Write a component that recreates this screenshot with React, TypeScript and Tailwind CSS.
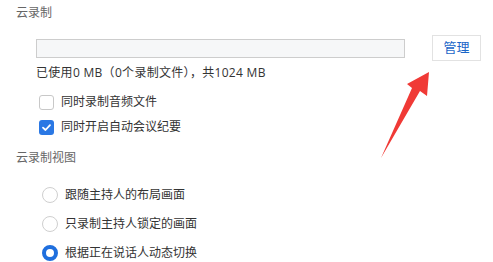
import React from "react";

function Checkbox({ checked }: { checked?: boolean }) {
  if (checked) {
    return (
      <div className="w-[15px] h-[15px] rounded-[3px] bg-[#2a78e4] flex items-center justify-center">
        <svg width="11" height="11" viewBox="0 0 11 11">
          <path d="M2 5.6 L4.5 8 L9 3.2" fill="none" stroke="#fff" strokeWidth="1.8" strokeLinecap="round" strokeLinejoin="round" />
        </svg>
      </div>
    );
  }
  return <div className="w-[15px] h-[15px] rounded-[3px] border border-[#c8c8c8] bg-white" />;
}

function Radio({ checked }: { checked?: boolean }) {
  if (checked) {
    return <div className="w-[16px] h-[16px] rounded-full border-[4px] border-[#1f6fde] bg-white" />;
  }
  return <div className="w-[16px] h-[16px] rounded-full border border-[#cfcfcf] bg-white" />;
}

export default function App() {
  return (
    <div className="relative w-[493px] h-[262px] bg-white overflow-hidden text-[12px] font-['Open_Sans','Noto_Sans_CJK_SC',sans-serif]">
      <div className="pl-4 pt-[4px] leading-[18px] text-[#666]">云录制</div>
      <div className="mt-[13px] flex items-center h-[26px]">
        <div className="ml-[36px] w-[369px] h-[19px] border border-[#cdcdcd] bg-[#f6f7f8]" />
        <div className="ml-[27px] w-[49px] h-[26px] border border-[#e2e2e2] bg-white flex items-center justify-center text-[#1a66c8] text-[13px]">
          管理
        </div>
      </div>
      <div className="mt-[3px] pl-[36px] leading-[18px] text-[#333] tracking-[0.3px]">已使用0 MB（0个录制文件），共1024 MB</div>
      <div className="mt-[10px] h-[20px] pl-[39px] flex items-center gap-[7px] text-[#333]">
        <Checkbox />
        <span>同时录制音频文件</span>
      </div>
      <div className="mt-[5px] h-[20px] pl-[39px] flex items-center gap-[7px] text-[#333]">
        <Checkbox checked />
        <span>同时开启自动会议纪要</span>
      </div>
      <div className="mt-[12px] pl-4 leading-[18px] text-[#666]">云录制视图</div>
      <div className="mt-[18px] h-[20px] pl-[42px] flex items-center gap-[7px] text-[#333]">
        <Radio />
        <span>跟随主持人的布局画面</span>
      </div>
      <div className="mt-[9px] h-[20px] pl-[42px] flex items-center gap-[7px] text-[#333]">
        <Radio />
        <span>只录制主持人锁定的画面</span>
      </div>
      <div className="mt-[9px] h-[20px] pl-[42px] flex items-center gap-[7px] text-[#333]">
        <Radio checked />
        <span>根据正在说话人动态切换</span>
      </div>
      <svg className="absolute left-0 top-0 pointer-events-none" width="493" height="262" viewBox="0 0 493 262">
        <polygon points="429,72 427,96 420,91 381,158 412,88 407,84" fill="#f03a36" />
      </svg>
    </div>
  );
}
